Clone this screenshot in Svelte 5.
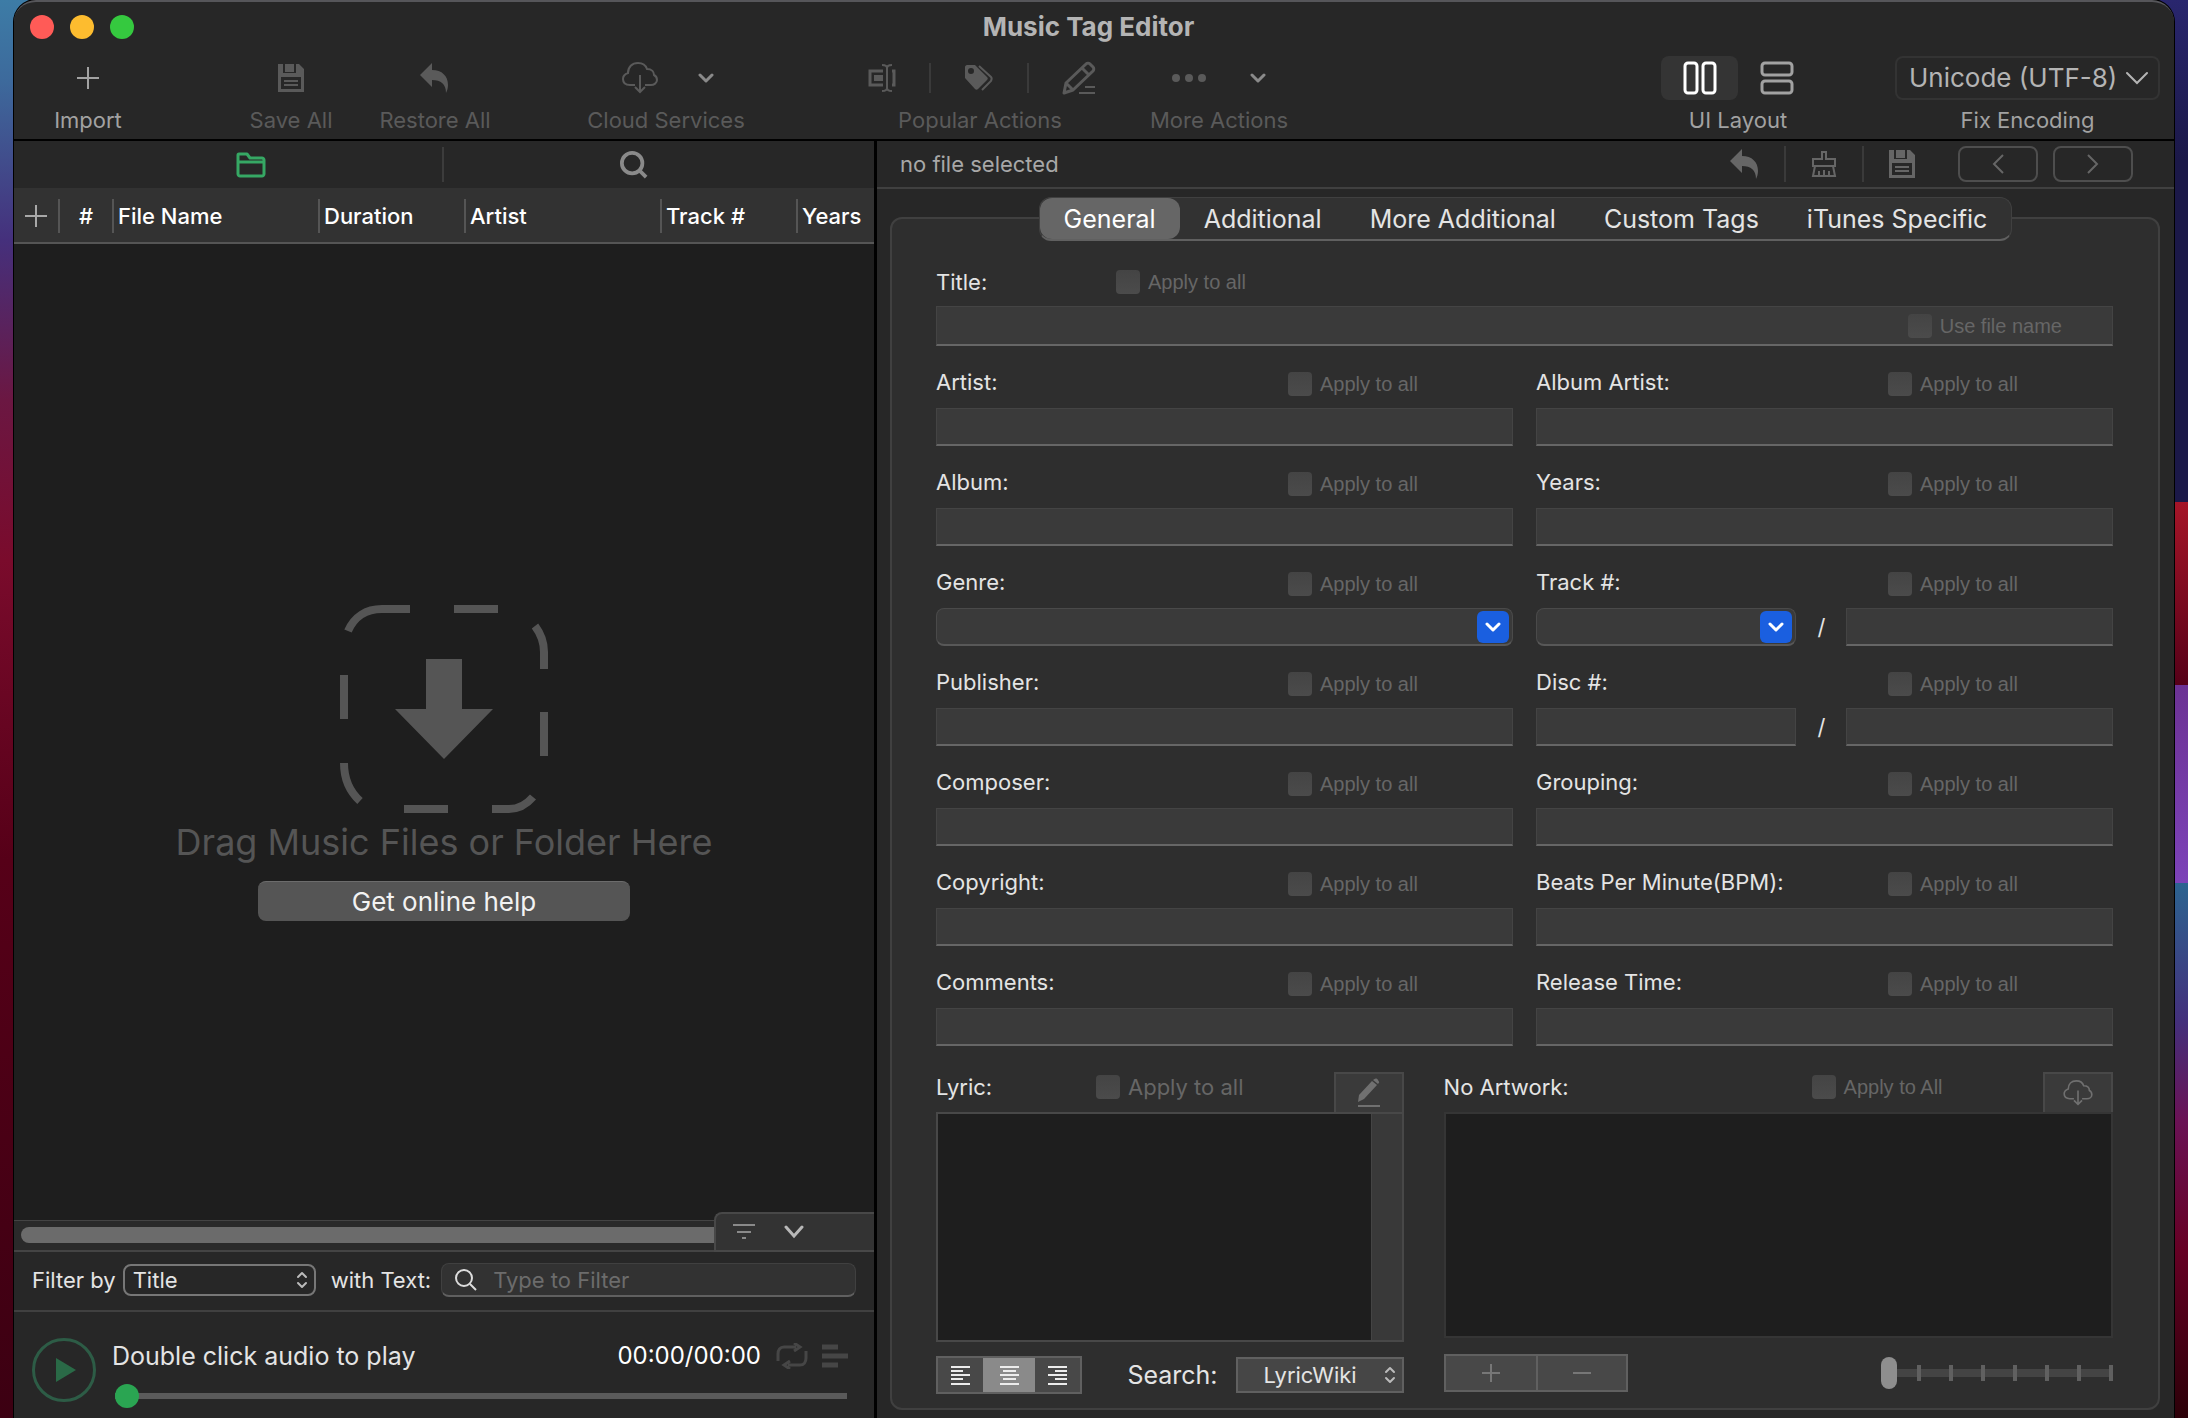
<script lang="ts">
    let activeTab = $state('General');
    let layout = $state('columns');
    let align = $state('center');
    let filterBy = $state('Title');
    let filterText = $state('');
    let provider = $state('LyricWiki');
    let encoding = $state('Unicode (UTF-8)');
    let position = $state(0);
    let zoom = $state(0);

    const tabs = ['General', 'Additional', 'More Additional', 'Custom Tags', 'iTunes Specific'];
    const columns = ['File Name', 'Duration', 'Artist', 'Track #', 'Years'];

    const fields = [
        { id: 'artist', label: 'Artist:', kind: 'text' },
        { id: 'album-artist', label: 'Album Artist:', kind: 'text' },
        { id: 'album', label: 'Album:', kind: 'text' },
        { id: 'years', label: 'Years:', kind: 'text' },
        { id: 'genre', label: 'Genre:', kind: 'combo' },
        { id: 'track', label: 'Track #:', kind: 'combo-pair' },
        { id: 'publisher', label: 'Publisher:', kind: 'text' },
        { id: 'disc', label: 'Disc #:', kind: 'pair' },
        { id: 'composer', label: 'Composer:', kind: 'text' },
        { id: 'grouping', label: 'Grouping:', kind: 'text' },
        { id: 'copyright', label: 'Copyright:', kind: 'text' },
        { id: 'bpm', label: 'Beats Per Minute(BPM):', kind: 'text' },
        { id: 'comments', label: 'Comments:', kind: 'text' },
        { id: 'release', label: 'Release Time:', kind: 'text' },
    ];

    const alignments = [
        { name: 'left', path: 'M1 2h19M1 6h12M1 10h19M1 14h12M1 19h19' },
        { name: 'center', path: 'M1 2h19M4 6h13M1 10h19M4 14h13M1 19h19' },
        { name: 'right', path: 'M1 2h19M8 6h12M1 10h19M8 14h12M1 19h19' },
    ];
</script>

{#snippet saveIcon()}
    <svg width="28" height="28" viewBox="0 0 28 28">
        <path fill="currentColor" fill-rule="evenodd" d="M1 0h5v9h13V0h3l5 5v23H1zM4 13v12h20V13z" />
        <path fill="currentColor" d="M8 0h9v8H8zM7 16h14v2H7zM7 20h14v2H7z" />
    </svg>
{/snippet}

{#snippet undoIcon()}
    <svg width="30" height="30" viewBox="0 0 30 30">
        <path fill="currentColor" d="M12 0v7c10 0 16 6 16 15 0 3-1 6-2 8 0-9-5-13-14-13v7L0 12z" />
    </svg>
{/snippet}

{#snippet cloudIcon()}
    <svg width="36" height="32" viewBox="0 0 36 32" fill="none" stroke="currentColor" stroke-width="2">
        <path d="M13 23H8c-4 0-7-2-7-6 0-3 2-5 5-6 0-6 4-10 10-10 5 0 8 3 9 6 5 0 7 3 7 6 2 1 3 3 3 5 0 3-3 5-6 5h-6" />
        <path d="M18 13v17M13 25l5 5 5-5" />
    </svg>
{/snippet}

{#snippet chevron()}
    <svg width="16" height="12" viewBox="0 0 16 12" fill="none" stroke="currentColor" stroke-width="3" stroke-linecap="round" stroke-linejoin="round">
        <path d="M2 3l6 6 6-6" />
    </svg>
{/snippet}

{#snippet updown()}
    <svg class="updown" width="12" height="18" viewBox="0 0 12 18" fill="none" stroke="currentColor" stroke-width="2" stroke-linecap="round" stroke-linejoin="round">
        <path d="M2 6l4-4 4 4M2 12l4 4 4-4" />
    </svg>
{/snippet}

{#snippet applyAll(id: string, text: string)}
    <label class="check" for={id}>
        <input {id} type="checkbox" disabled />
        {text}
    </label>
{/snippet}

{#snippet combo(id: string)}
    <div class="combo">
        <select {id}><option value=""></option></select>
        <span class="combo-arrow">{@render chevron()}</span>
    </div>
{/snippet}

<div class="desktop">
    <main class="window">
        <header class="titlebar">
            <div class="lights">
                <button class="light red" aria-label="Close"></button>
                <button class="light yellow" aria-label="Minimize"></button>
                <button class="light green" aria-label="Zoom"></button>
            </div>
            <h1>Music Tag Editor</h1>
        </header>

        <div class="toolbar">
            <button class="tool import">
                <span class="tool-icons">
                    <svg width="22" height="22" viewBox="0 0 22 22" stroke="currentColor" stroke-width="2"><path d="M11 0v22M0 11h22" /></svg>
                </span>
                Import
            </button>
            <button class="tool save dim">
                <span class="tool-icons">{@render saveIcon()}</span>
                Save All
            </button>
            <button class="tool restore dim">
                <span class="tool-icons">{@render undoIcon()}</span>
                Restore All
            </button>
            <button class="tool cloud dim">
                <span class="tool-icons wide">{@render cloudIcon()}<i class="light-arrow">{@render chevron()}</i></span>
                Cloud Services
            </button>
            <div class="tool popular dim">
                <span class="tool-icons spread">
                    <button aria-label="Rename">
                        <svg width="28" height="28" viewBox="0 0 28 28" fill="none" stroke="currentColor" stroke-width="3">
                            <path d="M15 7H2v14h13M24 7h2v14h-2" /><path d="M14 1c3 0 5 1 5 3v20c0 2-2 3-5 3M24 1c-3 0-5 1-5 3v20c0 2 2 3 5 3" stroke-width="2" />
                            <path fill="currentColor" stroke="none" d="M6 11h9v6H6z" />
                        </svg>
                    </button>
                    <i class="bar"></i>
                    <button aria-label="Tags">
                        <svg width="30" height="26" viewBox="0 0 30 26">
                            <path fill="currentColor" fill-rule="evenodd" d="M1 2c0-1 1-2 2-2h8l12 12c1 1 1 2 0 3l-9 9c-1 1-2 1-3 0L1 13zm6 1a3 3 0 1 0 0 6 3 3 0 0 0 0-6z" />
                            <path fill="none" stroke="currentColor" stroke-width="2" d="M15 1l12 11c1 1 1 2 0 4l-9 9" />
                        </svg>
                    </button>
                    <i class="bar"></i>
                    <button aria-label="Edit">
                        <svg width="34" height="34" viewBox="0 0 34 34" fill="none" stroke="currentColor" stroke-width="3" stroke-linejoin="round">
                            <path d="M2 32l2-10L24 3c1-1 3-1 4 0l3 3c1 1 1 3 0 4L11 29zM20 7l7 7M4 22l7 7" />
                            <path d="M23 26h10M17 32h16" stroke-width="2" />
                        </svg>
                    </button>
                </span>
                Popular Actions
            </div>
            <button class="tool more dim">
                <span class="tool-icons wide">
                    <svg width="34" height="10" viewBox="0 0 34 10" fill="currentColor"><circle cx="4" cy="5" r="4" /><circle cx="17" cy="5" r="4" /><circle cx="30" cy="5" r="4" /></svg>
                    <i class="light-arrow">{@render chevron()}</i>
                </span>
                More Actions
            </button>
            <div class="tool layout">
                <span class="tool-icons">
                    <button class="mode" class:active={layout === 'columns'} aria-label="Columns" onclick={() => (layout = 'columns')}>
                        <svg width="34" height="34" viewBox="0 0 34 34" fill="none" stroke="currentColor" stroke-width="3"><rect x="2" y="2" width="12" height="30" rx="3" /><rect x="20" y="2" width="12" height="30" rx="3" /></svg>
                    </button>
                    <button class="mode" class:active={layout === 'rows'} aria-label="Rows" onclick={() => (layout = 'rows')}>
                        <svg width="34" height="34" viewBox="0 0 34 34" fill="none" stroke="currentColor" stroke-width="3"><rect x="2" y="2" width="30" height="12" rx="3" /><rect x="2" y="20" width="30" height="12" rx="3" /></svg>
                    </button>
                </span>
                UI Layout
            </div>
            <div class="tool encoding">
                <span class="encoding-box">
                    <select id="encoding" bind:value={encoding}>
                        <option>Unicode (UTF-8)</option>
                        <option>Western (ISO Latin 1)</option>
                    </select>
                    <svg width="22" height="14" viewBox="0 0 22 14" fill="none" stroke="currentColor" stroke-width="2" stroke-linecap="round"><path d="M1 2l10 10L21 2" /></svg>
                </span>
                <label for="encoding">Fix Encoding</label>
            </div>
        </div>

        <div class="panes">
            <section class="library">
                <nav class="source">
                    <button class="on" aria-label="Files">
                        <svg width="30" height="26" viewBox="0 0 30 26" fill="none" stroke="currentColor" stroke-width="3" stroke-linejoin="round"><path d="M2 22V3c0-1 1-1 1-1h8l3 4h12c1 0 2 1 2 2v14c0 1-1 2-2 2H4c-1 0-2-1-2-2zM2 10h26" /></svg>
                    </button>
                    <button class="find" aria-label="Search">
                        <svg width="28" height="28" viewBox="0 0 30 30" fill="none" stroke="currentColor" stroke-width="4"><circle cx="13" cy="13" r="11" /><path d="M21 21l7 7" /></svg>
                    </button>
                </nav>

                <table>
                    <thead>
                        <tr>
                            <th class="c-add"><button aria-label="Add column"><svg width="22" height="22" viewBox="0 0 22 22" stroke="currentColor" stroke-width="2"><path d="M11 0v22M0 11h22" /></svg></button></th>
                            <th class="c-num"><span>#</span></th>
                            {#each columns as column, i}
                                <th class="c{i}"><span>{column}</span></th>
                            {/each}
                        </tr>
                    </thead>
                </table>

                <div class="dropzone">
                    <svg width="208" height="208" viewBox="0 0 208 208">
                        <g fill="none" stroke="currentColor" stroke-width="8">
                            <path d="M8 26C14 12 26 4 42 4h28M114 4h44M195 21c6 8 9 16 9 26v17M204 107v44M193 192c-6 7-14 12-24 12h-17M108 204H64M20 196C9 186 4 174 4 158M4 114V70" />
                        </g>
                        <path fill="currentColor" d="M86 54h36v50h31l-49 50-49-50h31z" />
                    </svg>
                    <p>Drag Music Files or Folder Here</p>
                    <button class="help">Get online help</button>
                </div>

                <div class="scroll-row">
                    <div class="scroll-track"><div class="scroll-thumb"></div></div>
                    <button class="filter-toggle" aria-label="Toggle filter">
                        <svg width="22" height="16" viewBox="0 0 22 16" stroke="currentColor" stroke-width="2"><path d="M0 1h22M4 8h14M9 14h4" /></svg>
                        <svg width="20" height="14" viewBox="0 0 20 14" fill="none" stroke="#b8b8b8" stroke-width="3" stroke-linecap="round"><path d="M2 2l8 9 8-9" /></svg>
                    </button>
                </div>

                <div class="filter-row">
                    <label for="filter-by">Filter by</label>
                    <div class="filter-select">
                        <select id="filter-by" bind:value={filterBy}>
                            <option>Title</option>
                            <option>Artist</option>
                            <option>Album</option>
                        </select>
                        {@render updown()}
                    </div>
                    <label class="with-text" for="filter-text">with Text:</label>
                    <div class="filter-search">
                        <svg width="22" height="22" viewBox="0 0 22 22" fill="none" stroke="#ddd" stroke-width="2"><circle cx="9" cy="9" r="8" /><path d="M15 15l6 6" /></svg>
                        <input id="filter-text" type="text" placeholder="Type to Filter" bind:value={filterText} />
                    </div>
                </div>

                <div class="player">
                    <button class="play" aria-label="Play">
                        <svg width="20" height="24" viewBox="0 0 20 24"><path fill="#2a6a47" d="M0 0l20 12L0 24z" /></svg>
                    </button>
                    <div class="deck">
                        <div class="now">
                            <span class="track-name">Double click audio to play</span>
                            <span class="time">00:00/00:00</span>
                            <button aria-label="Repeat">
                                <svg width="32" height="26" viewBox="0 0 32 26" fill="none" stroke="currentColor" stroke-width="3"><path d="M2 18v-7c0-4 2-7 6-7h12M18 0l6 4-6 4M30 8v7c0 4-2 7-6 7H12M14 18l-6 4 6 4" /></svg>
                            </button>
                            <button aria-label="Playlist">
                                <svg width="26" height="24" viewBox="0 0 26 24" stroke="currentColor" stroke-width="5"><path d="M0 3h16M0 12h26M0 21h16" /></svg>
                            </button>
                        </div>
                        <input class="seek" type="range" min="0" max="100" bind:value={position} aria-label="Position" />
                    </div>
                </div>
            </section>

            <section class="editor">
                <div class="editor-bar">
                    <span class="status">no file selected</span>
                    <button aria-label="Undo">{@render undoIcon()}</button>
                    <i class="bar"></i>
                    <button aria-label="Clear">
                        <svg width="28" height="28" viewBox="0 0 28 28" fill="none" stroke="currentColor" stroke-width="2"><path d="M12 9V2h4v7h9v7H3V9zM5 16L3 26h22l-2-10M9 26v-5M14 26v-6M19 26v-5" /></svg>
                    </button>
                    <i class="bar"></i>
                    <button aria-label="Save">{@render saveIcon()}</button>
                    <button class="step first" aria-label="Previous">
                        <svg width="12" height="20" viewBox="0 0 12 20" fill="none" stroke="currentColor" stroke-width="2"><path d="M11 1L2 10l9 9" /></svg>
                    </button>
                    <button class="step" aria-label="Next">
                        <svg width="12" height="20" viewBox="0 0 12 20" fill="none" stroke="currentColor" stroke-width="2"><path d="M1 1l9 9-9 9" /></svg>
                    </button>
                </div>

                <div class="tabs" role="tablist">
                    {#each tabs as tab}
                        <button role="tab" aria-selected={activeTab === tab} class:active={activeTab === tab} onclick={() => (activeTab = tab)}>{tab}</button>
                    {/each}
                </div>

                <form class="sheet">
                    <div class="field title-field">
                        <div class="field-head">
                            <label for="title">Title:</label>
                            {@render applyAll('title-all', 'Apply to all')}
                        </div>
                        <div class="box title-box">
                            <input id="title" type="text" />
                            {@render applyAll('use-name', 'Use file name')}
                        </div>
                    </div>

                    <div class="grid">
                        {#each fields as field}
                            <div class="field">
                                <div class="field-head">
                                    <label for={field.id}>{field.label}</label>
                                    {@render applyAll(field.id + '-all', 'Apply to all')}
                                </div>
                                {#if field.kind === 'text'}
                                    <input class="box" id={field.id} type="text" />
                                {:else if field.kind === 'combo'}
                                    {@render combo(field.id)}
                                {:else}
                                    <div class="pair">
                                        {#if field.kind === 'combo-pair'}
                                            {@render combo(field.id)}
                                        {:else}
                                            <input class="box" id={field.id} type="text" />
                                        {/if}
                                        <span>/</span>
                                        <input class="box" type="text" aria-label="{field.label} total" />
                                    </div>
                                {/if}
                            </div>
                        {/each}
                    </div>

                    <div class="extras">
                        <div class="lyric">
                            <div class="extra-head">
                                <label for="lyric">Lyric:</label>
                                {@render applyAll('lyric-all', 'Apply to all')}
                                <button type="button" class="corner" aria-label="Edit lyric">
                                    <svg width="24" height="30" viewBox="0 0 24 30" fill="currentColor"><path d="M1 24l1-7L15 3l5 4L7 21zM16 2c2-2 4-2 5 0s2 2 0 4zM1 27h22v2H1z" /></svg>
                                </button>
                            </div>
                            <div class="lyric-box">
                                <textarea id="lyric"></textarea>
                                <div class="gutter"></div>
                            </div>
                            <div class="extra-foot">
                                <div class="segments">
                                    {#each alignments as item}
                                        <button type="button" class:active={align === item.name} aria-label="Align {item.name}" onclick={() => (align = item.name)}>
                                            <svg width="21" height="21" viewBox="0 0 21 21" stroke="currentColor" stroke-width="2"><path d={item.path} /></svg>
                                        </button>
                                    {/each}
                                </div>
                                <label class="search-label" for="provider">Search:</label>
                                <div class="provider">
                                    <select id="provider" bind:value={provider}>
                                        <option>LyricWiki</option>
                                        <option>Musixmatch</option>
                                    </select>
                                    {@render updown()}
                                </div>
                            </div>
                        </div>

                        <div class="artwork">
                            <div class="extra-head">
                                <span>No Artwork:</span>
                                {@render applyAll('art-all', 'Apply to All')}
                                <button type="button" class="corner small" aria-label="Download artwork">{@render cloudIcon()}</button>
                            </div>
                            <div class="art-box"></div>
                            <div class="extra-foot">
                                <div class="segments plusminus">
                                    <button type="button" aria-label="Add artwork"><svg width="18" height="18" viewBox="0 0 18 18" stroke="currentColor" stroke-width="2"><path d="M9 0v18M0 9h18" /></svg></button>
                                    <button type="button" aria-label="Remove artwork"><svg width="18" height="18" viewBox="0 0 18 18" stroke="currentColor" stroke-width="2"><path d="M0 9h18" /></svg></button>
                                </div>
                                <input class="zoom" type="range" min="0" max="7" bind:value={zoom} aria-label="Artwork size" />
                            </div>
                        </div>
                    </div>
                </form>
            </section>
        </div>
    </main>
</div>

<style>
    :global(body) {
        margin: 0;
        background: #1e1e1e;
    }

    * {
        box-sizing: border-box;
    }

    .desktop {
        min-height: 100vh;
        padding: 0 14px;
        display: flex;
        font-family: Inter, "Liberation Sans", sans-serif;
        font-size: 22px;
        line-height: 28px;
        color: #e4e4e4;
        background:
            linear-gradient(180deg, #3d7ca6 0, #3d6a9c 80px, #45307c 240px, #6b1742 400px, #7a0b2c 560px, #560018 860px, #3c0012 100%) left / 50% 100% no-repeat,
            linear-gradient(180deg, #29266e 0, #1b1848 160px, #1b1848 502px, #a51528 502px, #560018 685px, #6c3294 685px, #7c42b8 883px, #2c6390 883px, #43307c 1020px, #6a1255 1120px, #660024 1250px, #2c0008 100%) right / 50% 100% no-repeat;
    }

    button,
    input,
    select,
    textarea {
        font: inherit;
        color: inherit;
        margin: 0;
        padding: 0;
        border: none;
        background: none;
        appearance: none;
        outline: none;
    }

    button {
        display: flex;
        align-items: center;
        justify-content: center;
    }

    svg {
        display: block;
        flex: none;
    }

    .window {
        flex: 1;
        min-width: 0;
        display: flex;
        flex-direction: column;
        background: #272727;
        border-top: 2px solid #56565a;
        border-radius: 22px 22px 0 0;
        box-shadow: 0 0 0 1px #000;
    }

    .titlebar {
        height: 50px;
        padding: 0 27px 0 16px;
        display: grid;
        grid-template-columns: 1fr auto 1fr;
        align-items: center;
    }

    .lights {
        display: flex;
        gap: 16px;
    }

    .light {
        width: 24px;
        height: 24px;
        border-radius: 50%;
    }

    .red { background: #ff5b57; }
    .yellow { background: #fdbc2f; }
    .green { background: #35c93f; }

    h1 {
        margin: 0;
        font-size: 26px;
        font-weight: 700;
        line-height: 32px;
        color: #b4b4b4;
    }

    .toolbar {
        height: 89px;
        padding: 0 14px 0 32px;
        display: flex;
        border-bottom: 2px solid #000;
        color: #a2a2a2;
    }

    .tool {
        flex: none;
        display: flex;
        flex-direction: column;
        align-items: center;
        justify-content: flex-start;
        white-space: nowrap;
    }

    .dim {
        color: #5a5a5a;
    }

    .tool-icons {
        height: 44px;
        margin: 4px 0 6px;
        display: flex;
        align-items: center;
        justify-content: center;
    }

    .tool-icons.wide {
        gap: 44px;
    }

    .cloud .tool-icons {
        gap: 40px;
        padding-left: 4px;
    }

    .tool-icons.spread {
        width: 100%;
        justify-content: space-between;
        padding: 0 16px 0 20px;
    }

    .light-arrow {
        color: #8a8a8a;
    }

    .bar {
        width: 2px;
        height: 30px;
        background: #3a3a3a;
    }

    .import { width: 84px; }
    .save { width: 102px; margin-left: 110px; }
    .restore { width: 118px; margin-left: 34px; }
    .cloud { width: 160px; margin-left: 92px; }
    .popular { width: 264px; margin-left: 102px; }
    .more { width: 142px; margin-left: 36px; }
    .layout { width: 154px; margin-left: auto; }
    .encoding { width: 265px; margin-left: 80px; }

    .mode {
        width: 77px;
        height: 44px;
        border-radius: 8px;
    }

    .mode.active {
        background: #343434;
        color: #fff;
    }

    .encoding-box {
        width: 100%;
        height: 44px;
        margin: 4px 0 6px;
        padding: 0 10px 0 12px;
        display: flex;
        align-items: center;
        border: 2px solid #333;
        border-radius: 8px;
        color: #b4b4b4;
    }

    .encoding-box select {
        flex: 1;
        min-width: 0;
        font-size: 26px;
        line-height: 32px;
    }

    .panes {
        flex: 1;
        display: grid;
        grid-template-columns: minmax(0, 43fr) minmax(0, 65fr);
    }

    .library {
        display: flex;
        flex-direction: column;
    }

    .source {
        height: 47px;
        display: grid;
        grid-template-columns: 1fr 1fr;
        color: #8a8a8a;
    }

    .source button {
        margin: 6px 0;
    }

    .source .on {
        color: #36a864;
        padding-left: 46px;
        border-right: 2px solid #3c3c3c;
    }

    .source .find {
        padding-right: 50px;
    }

    table {
        width: 100%;
        height: 56px;
        table-layout: fixed;
        border-collapse: collapse;
        background: #323232;
        border-bottom: 2px solid #555;
    }

    th {
        padding: 2px 0 0;
        font-weight: 500;
        text-align: left;
        white-space: nowrap;
        color: #fff;
    }

    th span {
        display: block;
        padding-left: 4px;
        border-left: 2px solid #555;
        line-height: 34px;
    }

    .c-add { width: 44px; color: #a8a8a8; }
    .c-add button { width: 100%; }
    .c-num { width: 54px; }
    .c-num span { text-align: center; padding: 0; }
    .c0 { width: 206px; }
    .c1 { width: 146px; }
    .c2 { width: 196px; }
    .c3 { width: 136px; }

    .dropzone {
        flex: 1;
        padding-top: 70px;
        display: flex;
        flex-direction: column;
        align-items: center;
        justify-content: center;
        background: #1e1e1e;
        color: #555;
    }

    .dropzone p {
        margin: 8px 0 18px;
        font-size: 36px;
        line-height: 42px;
    }

    .help {
        width: 372px;
        height: 40px;
        border-radius: 8px;
        border-top: 1px solid #6c6c6c;
        background: #555;
        color: #f2f2f2;
        font-size: 26px;
        line-height: 32px;
    }

    .scroll-row {
        height: 40px;
        display: flex;
        align-items: flex-end;
        background: #1e1e1e;
    }

    .scroll-track {
        flex: 1;
        height: 32px;
        padding: 6px 0 0 7px;
        background: #2a2a2a;
        border-top: 1px solid #444;
        border-bottom: 2px solid #444;
    }

    .scroll-thumb {
        height: 16px;
        border-radius: 8px 0 0 8px;
        background: #6b6b6b;
    }

    .filter-toggle {
        width: 160px;
        height: 40px;
        padding-left: 17px;
        gap: 29px;
        justify-content: flex-start;
        border: 2px solid #484848;
        border-right: none;
        border-radius: 8px 0 0 0;
        background: #333;
        color: #8a8a8a;
    }

    .filter-row {
        height: 60px;
        padding: 0 18px 2px;
        display: flex;
        align-items: center;
        border-bottom: 2px solid #404040;
        white-space: nowrap;
    }

    .filter-select,
    .provider {
        position: relative;
    }

    .filter-select {
        width: 193px;
        margin-left: 7px;
    }

    .filter-select select {
        display: block;
        width: 100%;
        height: 32px;
        padding-left: 8px;
        border: 2px solid #777;
        border-radius: 8px;
        line-height: 26px;
    }

    .updown {
        position: absolute;
        right: 8px;
        top: 50%;
        transform: translateY(-50%);
        color: #bbb;
        pointer-events: none;
    }

    .with-text {
        margin-left: 15px;
    }

    .filter-search {
        flex: 1;
        min-width: 0;
        height: 34px;
        margin-left: 10px;
        padding-left: 13px;
        display: flex;
        align-items: center;
        gap: 16px;
        background: #323232;
        border: 1px solid #404040;
        border-bottom: 2px solid #606060;
        border-radius: 8px;
    }

    .filter-search input {
        flex: 1;
        min-width: 0;
    }

    .filter-search input::placeholder {
        color: #6c6c6c;
        opacity: 1;
    }

    .player {
        height: 106px;
        padding: 10px 26px 0 18px;
        display: flex;
        align-items: center;
        gap: 16px;
    }

    .play {
        width: 64px;
        height: 64px;
        padding-left: 4px;
        border: 3px solid #2d5c46;
        border-radius: 50%;
    }

    .deck {
        flex: 1;
        min-width: 0;
        padding-top: 8px;
    }

    .now {
        display: flex;
        align-items: center;
        color: #464646;
    }

    .track-name {
        flex: 1;
        font-size: 25px;
        line-height: 32px;
        color: #e4e4e4;
    }

    .time {
        margin-right: 15px;
        font-size: 24px;
        color: #fff;
    }

    .now button + button {
        margin-left: 14px;
    }

    .seek {
        display: block;
        width: calc(100% - 4px);
        height: 24px;
        margin: 12px 0 0 3px;
        background: linear-gradient(#5a5a5a, #5a5a5a) center / 100% 6px no-repeat;
    }

    .seek::-webkit-slider-thumb {
        appearance: none;
        width: 24px;
        height: 24px;
        border-radius: 50%;
        background: #2aa552;
    }

    .editor {
        border-left: 3px solid #000;
        padding-bottom: 8px;
        display: flex;
        flex-direction: column;
    }

    .editor-bar {
        height: 48px;
        padding: 0 41px 0 23px;
        display: flex;
        align-items: center;
        border-bottom: 2px solid #404040;
        color: #666;
    }

    .status {
        margin-right: auto;
        color: #a8a8a8;
    }

    .editor-bar .bar {
        height: 36px;
        margin: 0 24px;
    }

    .editor-bar .step {
        width: 80px;
        height: 36px;
        margin-left: 15px;
        border: 2px solid #4e4e4e;
        border-radius: 8px;
    }

    .editor-bar .first {
        margin-left: 42px;
    }

    .tabs {
        position: relative;
        z-index: 1;
        align-self: center;
        display: flex;
        margin: 8px 0 -24px;
        background: #323232;
        border: 1px solid #404040;
        border-bottom: 2px solid #606060;
        border-radius: 12px;
    }

    .tabs button {
        height: 41px;
        padding: 0 24px;
        border-radius: 12px;
        font-size: 25px;
        line-height: 32px;
    }

    .tabs .active {
        background: #666;
        color: #fff;
    }

    .sheet {
        flex: 1;
        margin: 0 14px 0 13px;
        padding: 47px 45px 13px 44px;
        background: #2e2e2e;
        border: 2px solid #404040;
        border-radius: 12px;
    }

    .field-head {
        height: 32px;
        margin-bottom: 10px;
        display: grid;
        grid-template-columns: 352px auto;
        justify-content: start;
        align-items: center;
        white-space: nowrap;
    }

    .title-field .field-head {
        margin-bottom: 8px;
        grid-template-columns: 180px auto;
    }

    .check {
        display: flex;
        align-items: center;
        gap: 8px;
        padding-top: 4px;
        font-family: "Liberation Sans", sans-serif;
        font-size: 20px;
        line-height: 24px;
        color: #666;
    }

    .title-field .check {
        padding-top: 0;
    }

    .check input {
        width: 24px;
        height: 24px;
        border-radius: 4px;
        background: linear-gradient(#444, #4b4b4b);
    }

    .box {
        display: block;
        width: 100%;
        min-width: 0;
        height: 38px;
        padding: 0 8px;
        background: #3a3a3a;
        border: 1px solid #444;
        border-bottom: 2px solid #666;
    }

    .title-box {
        height: 40px;
        padding-right: 50px;
        display: flex;
        align-items: center;
    }

    .title-box input[type="text"] {
        flex: 1;
        min-width: 0;
    }

    .grid {
        margin-top: 20px;
        display: grid;
        grid-template-columns: 1fr 1fr;
        gap: 20px 23px;
    }

    .combo {
        position: relative;
        width: 100%;
    }

    .combo select {
        display: block;
        width: 100%;
        height: 38px;
        padding: 0 40px 0 10px;
        background: #3a3a3a;
        border: 1px solid #4a4a4a;
        border-bottom: 2px solid #585858;
        border-radius: 8px;
    }

    .combo-arrow {
        position: absolute;
        top: 3px;
        right: 4px;
        width: 32px;
        height: 32px;
        display: flex;
        align-items: center;
        justify-content: center;
        border-radius: 6px;
        background: #1a5fe0;
        color: #fff;
        pointer-events: none;
    }

    .pair {
        display: grid;
        grid-template-columns: minmax(0, 260fr) 50px minmax(0, 266fr);
        align-items: center;
        text-align: center;
    }

    .extras {
        margin-top: 26px;
        display: grid;
        grid-template-columns: minmax(0, 468fr) minmax(0, 670fr);
        gap: 40px;
    }

    .extra-head {
        height: 40px;
        display: grid;
        grid-template-columns: 160px 1fr 70px;
        align-items: center;
        white-space: nowrap;
    }

    .artwork .extra-head {
        grid-template-columns: 368px 1fr 70px;
    }

    .extra-head > :not(.corner) {
        padding: 0 0 10px;
    }

    .lyric .check {
        font-family: Inter, sans-serif;
        font-size: 22px;
    }

    .corner {
        height: 40px;
        background: #3a3a3a;
        border: 2px solid #484848;
        border-bottom: none;
        color: #707070;
    }

    .small :global(svg) {
        width: 30px;
        height: 26px;
    }

    .lyric-box {
        height: 230px;
        display: flex;
        border: 2px solid #484848;
    }

    .lyric-box textarea {
        flex: 1;
        min-width: 0;
        resize: none;
        background: #1e1e1e;
    }

    .gutter {
        width: 31px;
        background: #393939;
        border-left: 1px solid #444;
    }

    .art-box {
        height: 226px;
        background: #1e1e1e;
        border: 2px solid #353535;
    }

    .extra-foot {
        margin-top: 14px;
        display: flex;
        align-items: center;
    }

    .artwork .extra-foot {
        margin-top: 16px;
    }

    .segments {
        display: flex;
        height: 38px;
        background: #484848;
        border: 2px solid #606060;
    }

    .segments button {
        width: 45px;
        color: #ececec;
    }

    .segments .active {
        width: 52px;
        background: #8a8a8a;
    }

    .segments.plusminus button {
        width: 90px;
        color: #777;
    }

    .plusminus button + button {
        border-left: 2px solid #606060;
    }

    .search-label {
        margin: 0 18px 0 auto;
        font-size: 25px;
        line-height: 32px;
    }

    .provider {
        width: 168px;
    }

    .provider select {
        display: block;
        width: 100%;
        height: 36px;
        padding-left: 26px;
        background: #464646;
        border: 2px solid #606060;
    }

    .zoom {
        width: 232px;
        height: 32px;
        margin-left: auto;
        background:
            repeating-linear-gradient(90deg, transparent 0, transparent 28px, #606060 28px, #606060 32px) right / 224px 16px no-repeat,
            linear-gradient(#444, #444) center / 100% 8px no-repeat;
    }

    .zoom::-webkit-slider-thumb {
        appearance: none;
        width: 16px;
        height: 32px;
        border-radius: 8px;
        background: #8e8e8e;
    }
</style>
